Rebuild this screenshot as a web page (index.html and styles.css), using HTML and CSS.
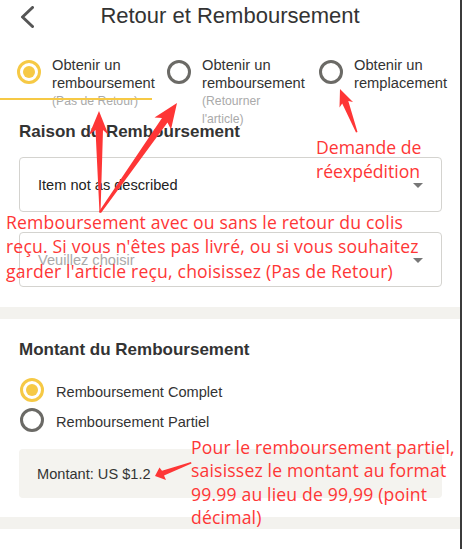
FILE: index.html
```html
<!DOCTYPE html>
<html lang="fr">
<head>
<meta charset="utf-8">
<title>Retour et Remboursement</title>
<link rel="stylesheet" href="styles.css">
</head>
<body>
<div class="page">
  <header class="topbar">
    <span class="back">
      <svg width="14" height="22" viewBox="0 0 14 22"><polyline points="12.5,1.5 2.5,11 12.5,20.5" fill="none" stroke="#555" stroke-width="3" stroke-linecap="round" stroke-linejoin="round"/></svg>
    </span>
    <h1 class="title">Retour et Remboursement</h1>
    <span></span>
  </header>

  <div class="types">
    <div class="type-option">
      <span class="radio on"></span>
      <div class="type-label">
        <div class="type-text">Obtenir un<br>remboursement</div>
        <div class="type-sub">(Pas de Retour)</div>
      </div>
      <span class="tab-indicator"></span>
    </div>
    <div class="type-option">
      <span class="radio"></span>
      <div class="type-label">
        <div class="type-text">Obtenir un<br>remboursement</div>
        <div class="type-sub">(Retourner<br>l'article)</div>
      </div>
    </div>
    <div class="type-option">
      <span class="radio"></span>
      <div class="type-label">
        <div class="type-text">Obtenir un<br>remplacement</div>
      </div>
    </div>
  </div>

  <section class="section reason">
    <h2 class="section-title">Raison du Remboursement</h2>
    <div class="select"><span>Item not as described</span><span class="caret"></span></div>
    <div class="select placeholder"><span>Veuillez choisir</span><span class="caret"></span></div>
  </section>

  <div class="divider"></div>

  <section class="section amount">
    <h2 class="section-title">Montant du Remboursement</h2>
    <div class="radio-list">
      <div class="radio-row"><span class="radio on"></span><span class="radio-text">Remboursement Complet</span></div>
      <div class="radio-row"><span class="radio"></span><span class="radio-text">Remboursement Partiel</span></div>
    </div>
    <div class="amount-box">Montant: US $1.2</div>
  </section>

  <div class="divider divider-bottom"></div>

  <svg class="arrows" width="462" height="549" viewBox="0 0 462 549">
    <polygon points="99,111 108.5,135 103,130 100.5,213 99.5,213 95.5,130 89,135"/>
    <polygon points="177,103 171,129.5 167.5,122.5 101,213 99,211.5 162,118 154.5,117.5"/>
    <polygon points="340,89 353,102 348.3,101 357.5,132 356,132.5 342.2,103.5 339.5,107.5"/>
    <polygon points="155,476 159.5,467.5 162,470.8 191,462 191.5,463.5 164,475.6 166,480"/>
  </svg>

  <div class="note note-c">Demande de<br>réexpédition</div>
  <div class="note note-a">Remboursement avec ou sans le retour du colis<br>reçu. Si vous n'êtes pas livré, ou si vous souhaitez<br>garder l'article reçu, choisissez (Pas de Retour)</div>
  <div class="note note-d">Pour le remboursement partiel,<br>saisissez le montant au format<br>99.99 au lieu de 99,99 (point<br>décimal)</div>
</div>
</body>
</html>
```

FILE: styles.css
```css
* { box-sizing: border-box; }

body {
  margin: 0;
  font-family: "Liberation Sans", Arial, sans-serif;
  color: #333;
  background: #fff;
}

.page {
  position: relative;
  width: 462px;
  height: 549px;
  border-right: 2px solid #3b3b3b;
  overflow: hidden;
}

.topbar {
  display: grid;
  grid-template-columns: 40px 1fr 40px;
  align-items: center;
  height: 32px;
}

.back {
  display: flex;
  align-items: center;
  padding-left: 20px;
  padding-top: 2px;
}

.title {
  margin: 0;
  font-size: 22px;
  font-weight: normal;
  line-height: 32px;
  text-align: center;
  color: #333;
}

.types {
  display: grid;
  grid-template-columns: 150px 152px 1fr;
  padding-left: 17px;
  margin-top: 24px;
  height: 66px;
}

.type-option {
  position: relative;
  display: flex;
  gap: 11px;
}

.radio {
  flex: none;
  width: 24px;
  height: 24px;
  border: 3px solid #6b6a66;
  border-radius: 50%;
  display: flex;
  align-items: center;
  justify-content: center;
}

.types .radio { margin-top: 4px; }

.radio.on { border-color: #f6c945; }

.radio.on::after {
  content: "";
  width: 12px;
  height: 12px;
  border-radius: 50%;
  background: #f6c945;
}

.type-text {
  font-size: 14.7px;
  line-height: 18px;
  color: #333;
  white-space: nowrap;
}

.type-sub {
  font-size: 12.2px;
  line-height: 18px;
  color: #aaa;
  white-space: nowrap;
}

.tab-indicator {
  position: absolute;
  left: -17px;
  top: 42px;
  width: 152px;
  height: 2px;
  background: #f6c945;
}

.section {
  padding: 0 18px 0 19px;
}

.section-title {
  margin: 0;
  font-size: 17px;
  line-height: 20px;
  font-weight: bold;
  color: #333;
}

.select {
  margin-top: 15px;
  height: 55px;
  border: 1px solid #d4d3cf;
  border-radius: 4px;
  display: flex;
  align-items: center;
  justify-content: space-between;
  padding: 0 18px 0 18px;
  font-size: 14.6px;
  color: #222;
}

.select + .select { margin-top: 20px; }

.select.placeholder { color: #a9a9a9; }

.caret {
  width: 0;
  height: 0;
  margin-top: 2px;
  border-left: 5.5px solid transparent;
  border-right: 5.5px solid transparent;
  border-top: 5.5px solid #777;
}

.divider {
  height: 12px;
  margin-top: 20px;
  background: #f3f2ee;
}

.amount { padding-top: 21px; }

.radio-list {
  margin-top: 15px;
  padding-left: 1px;
}

.radio-row {
  display: flex;
  align-items: center;
  gap: 12px;
  height: 30px;
  font-size: 14.6px;
  color: #333;
}

.radio-text { margin-top: 3px; }

.amount-box {
  margin-top: 14px;
  height: 49px;
  border-radius: 4px;
  background: #f4f3ef;
  display: flex;
  align-items: center;
  padding-left: 18px;
  font-size: 14.6px;
  color: #333;
}

.divider-bottom { margin-top: 19px; }

.arrows {
  position: absolute;
  left: 0;
  top: 0;
  fill: #fe3636;
  pointer-events: none;
}

.note {
  position: absolute;
  font-family: "Open Sans", "DejaVu Sans", sans-serif;
  font-size: 17.6px;
  line-height: 24px;
  letter-spacing: 0.17px;
  color: #fe3636;
  white-space: nowrap;
}

.note-c { left: 316px; top: 135px; letter-spacing: 0; }
.note-a { left: 6px; top: 210px; line-height: 24.3px; }
.note-d { left: 191px; top: 436px; line-height: 23.3px; }
```
